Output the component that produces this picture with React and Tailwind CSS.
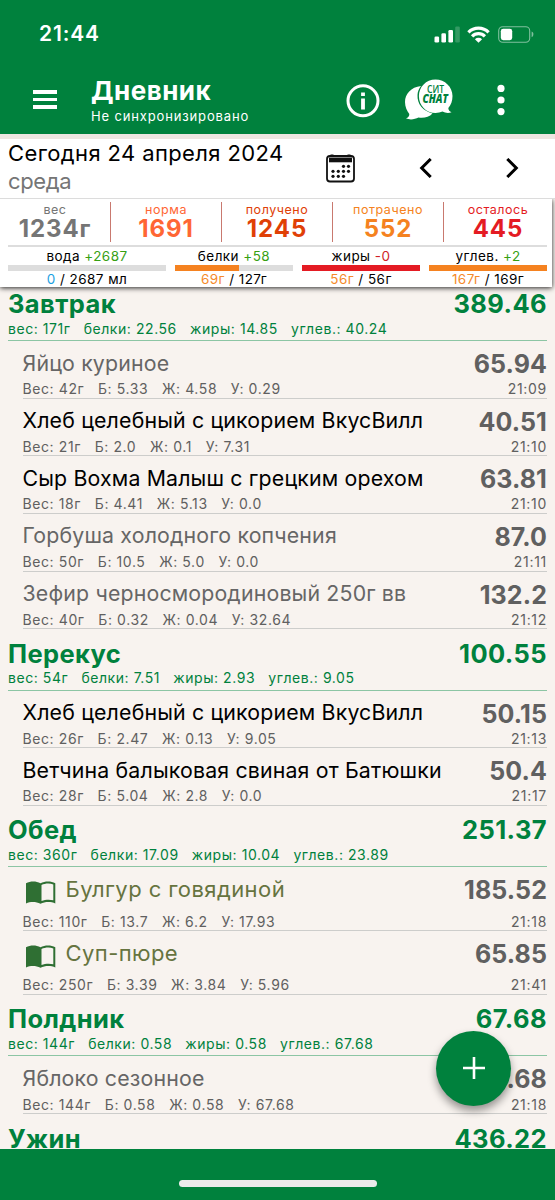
import React from "react";

const meals = [
  {
    name: "Завтрак", total: "389.46",
    meta: ["вес: 171г", "белки: 22.56", "жиры: 14.85", "углев.: 40.24"],
    items: [
      { name: "Яйцо куриное", kcal: "65.94", time: "21:09", meta: ["Вес: 42г", "Б: 5.33", "Ж: 4.58", "У: 0.29"] },
      { name: "Хлеб целебный с цикорием ВкусВилл", kcal: "40.51", time: "21:10", dark: true, meta: ["Вес: 21г", "Б: 2.0", "Ж: 0.1", "У: 7.31"] },
      { name: "Сыр Вохма Малыш с грецким орехом", kcal: "63.81", time: "21:10", dark: true, meta: ["Вес: 18г", "Б: 4.41", "Ж: 5.13", "У: 0.0"] },
      { name: "Горбуша холодного копчения", kcal: "87.0", time: "21:11", meta: ["Вес: 50г", "Б: 10.5", "Ж: 5.0", "У: 0.0"] },
      { name: "Зефир черносмородиновый 250г вв", kcal: "132.2", time: "21:12", meta: ["Вес: 40г", "Б: 0.32", "Ж: 0.04", "У: 32.64"] },
    ],
  },
  {
    name: "Перекус", total: "100.55",
    meta: ["вес: 54г", "белки: 7.51", "жиры: 2.93", "углев.: 9.05"],
    items: [
      { name: "Хлеб целебный с цикорием ВкусВилл", kcal: "50.15", time: "21:13", dark: true, meta: ["Вес: 26г", "Б: 2.47", "Ж: 0.13", "У: 9.05"] },
      { name: "Ветчина балыковая свиная от Батюшки", kcal: "50.4", time: "21:17", dark: true, meta: ["Вес: 28г", "Б: 5.04", "Ж: 2.8", "У: 0.0"] },
    ],
  },
  {
    name: "Обед", total: "251.37",
    meta: ["вес: 360г", "белки: 17.09", "жиры: 10.04", "углев.: 23.89"],
    items: [
      { name: "Булгур с говядиной", kcal: "185.52", time: "21:18", recipe: true, meta: ["Вес: 110г", "Б: 13.7", "Ж: 6.2", "У: 17.93"] },
      { name: "Суп-пюре", kcal: "65.85", time: "21:41", recipe: true, meta: ["Вес: 250г", "Б: 3.39", "Ж: 3.84", "У: 5.96"] },
    ],
  },
  {
    name: "Полдник", total: "67.68",
    meta: ["вес: 144г", "белки: 0.58", "жиры: 0.58", "углев.: 67.68"],
    items: [
      { name: "Яблоко сезонное", kcal: "67.68", time: "21:18", meta: ["Вес: 144г", "Б: 0.58", "Ж: 0.58", "У: 67.68"] },
    ],
  },
  { name: "Ужин", total: "436.22", meta: [], items: [] },
];

const totals = [
  { label: "вес", value: "1234г", color: "text-[#757575]" },
  { label: "норма", value: "1691", color: "text-[#ff6634]" },
  { label: "получено", value: "1245", color: "text-[#e04006]" },
  { label: "потрачено", value: "552", color: "text-[#f58220]" },
  { label: "осталось", value: "445", color: "text-[#e41b23]" },
];

const bars = [
  { label: "вода", diff: "+2687", diffColor: "text-[#36a013]", now: "0", nowColor: "text-[#1ba1e2]", goal: "2687 мл", pct: 0, fill: "bg-[#1ba1e2]" },
  { label: "белки", diff: "+58", diffColor: "text-[#36a013]", now: "69г", nowColor: "text-[#f58a2a]", goal: "127г", pct: 54, fill: "bg-[#f58220]" },
  { label: "жиры", diff: "-0", diffColor: "text-[#d01f26]", now: "56г", nowColor: "text-[#f58a2a]", goal: "56г", pct: 100, fill: "bg-[#e41b23]" },
  { label: "углев.", diff: "+2", diffColor: "text-[#36a013]", now: "167г", nowColor: "text-[#f58a2a]", goal: "169г", pct: 100, fill: "bg-[#f58220]" },
];

function StatusBar() {
  return (
    <div className="flex h-[68px] items-center pl-[39px] pr-[21px]">
      <span className="text-[21px] leading-[24px] font-semibold tracking-[0.84px]">21:44</span>
      <div className="ml-auto flex items-center">
        <svg className="h-[17px] w-[26px]" viewBox="0 0 26 17" fill="white">
          <rect x="0.5" y="10.5" width="4.6" height="6" rx="1.3" />
          <rect x="7.4" y="7.3" width="4.6" height="9.2" rx="1.3" />
          <rect x="14.4" y="4" width="4.6" height="12.5" rx="1.3" />
          <rect x="21.2" y="0.5" width="4.6" height="16" rx="1.3" opacity="0.2" />
        </svg>
        <svg className="ml-[7px] h-[17px] w-[23px]" viewBox="0 0 23 17" fill="none" stroke="white" strokeWidth="3.2">
          <path d="M1.4 6.3A14.4 14.4 0 0 1 21.6 6.3" />
          <path d="M5.1 10.3A9 9 0 0 1 17.9 10.3" />
          <path d="M11.5 16.8L7.9 13.2A5.1 5.1 0 0 1 15.1 13.2Z" fill="white" stroke="none" />
        </svg>
        <svg className="ml-[8px] h-[17px] w-[36px]" viewBox="0 0 36 17">
          <rect x="0.7" y="0.7" width="31" height="15.6" rx="4" fill="none" stroke="white" strokeOpacity="0.5" strokeWidth="1.1" />
          <rect x="2.8" y="2.8" width="11.4" height="11.4" rx="2.4" fill="white" />
          <path d="M33.6 5.6C36 6.3 36 10.3 33.6 11.2Z" fill="white" opacity="0.5" />
        </svg>
      </div>
    </div>
  );
}

function ChatIcon() {
  return (
    <svg className="h-[42px] w-[50px]" viewBox="0 0 50 42">
      <path d="M17 7C7 8 1 15 1 23C1 28 3 32 5.3 35C5.5 37 4 38.5 2 39.6C6 41 11 40.5 14.5 38.6C20 39.5 25 38 28.5 34.5C19 32 13 25 13.5 16C13.6 12.5 15 9.5 17 7Z" fill="white" />
      <path d="M31.5 0.5C22 0.5 14.9 8 14.9 17C14.9 26.5 22 34 31.5 34C34 34 36.5 33.500 38.5 32.6C41 34 44.5 34.5 47.5 33.3C45.5 32.5 44.5 31.3 44.3 29C47 26 48.5 22 48.5 17C48.5 8 41 0.5 31.5 0.5Z" fill="white" />
      <text x="31.5" y="13.6" textAnchor="middle" fontFamily="Open Sans" fontSize="10" letterSpacing="0" fontWeight="600" fill="#00813d" textLength="17" lengthAdjust="spacingAndGlyphs">СИТ</text>
      <text x="31.3" y="23.8" textAnchor="middle" fontFamily="Open Sans" fontSize="11.4" fontWeight="800" fontStyle="italic" fill="#00813d" textLength="25.5" lengthAdjust="spacingAndGlyphs">CHAT</text>
    </svg>
  );
}

function TopBar() {
  return (
    <div className="flex h-[66px] items-center pl-[33px]">
      <div className="-mt-[3px] flex w-[24px] flex-col gap-[4px]">
        <div className="h-[3.6px] bg-white" />
        <div className="h-[3.6px] bg-white" />
        <div className="h-[3.6px] bg-white" />
      </div>
      <div className="ml-[34px] w-[255px]">
        <div className="text-[26px] leading-[30px] font-bold tracking-[0.48px]">Дневник</div>
        <div className="text-[13px] leading-[20px] tracking-[0.85px]">Не синхронизировано</div>
      </div>
      <svg className="h-[34px] w-[34px]" viewBox="0 0 34 34" fill="none" stroke="white">
        <circle cx="17" cy="16.8" r="15" strokeWidth="3" />
        <path d="M17 14.5V25.5M17 8.5V12" strokeWidth="3.8" />
      </svg>
      <div className="-mt-[2px] ml-[24px]"><ChatIcon /></div>
      <svg className="-mt-[3px] ml-[42px] h-[32px] w-[10px]" viewBox="0 0 10 32" fill="white">
        <circle cx="5" cy="4.4" r="3.6" />
        <circle cx="5" cy="16" r="3.6" />
        <circle cx="5" cy="27.6" r="3.6" />
      </svg>
    </div>
  );
}

function DateBar() {
  return (
    <div className="flex h-[60px] border-b border-[#dcdcdc] bg-white pl-[8px]">
      <div className="w-[316px] whitespace-nowrap text-[22px] leading-[28px]">
        <div className="tracking-[0.38px]">Сегодня 24 апреля 2024</div>
        <div className="text-[#757575] tracking-[-0.35px]">среда</div>
      </div>
      <svg className="mt-[14px] h-[30px] w-[32px]" viewBox="0 0 32 30">
        <rect x="3" y="3" width="27" height="25.500" rx="3" fill="none" stroke="#111" strokeWidth="1.8" />
        <rect x="5" y="4.5" width="23" height="4.800" fill="#111" />
        <path d="M8 1.5V4M25 1.5V4" stroke="#111" strokeWidth="3" />
        <g fill="#111">
          <circle cx="19.5" cy="13.3" r="1.6" /><circle cx="24.5" cy="13.3" r="1.6" />
          <circle cx="9" cy="18.3" r="1.6" /><circle cx="14.3" cy="18.3" r="1.6" /><circle cx="19.5" cy="18.3" r="1.6" /><circle cx="24.5" cy="18.3" r="1.6" />
          <circle cx="9" cy="23.3" r="1.6" /><circle cx="14.3" cy="23.3" r="1.6" /><circle cx="19.5" cy="23.3" r="1.6" />
        </g>
      </svg>
      <svg className="ml-[63px] mt-[19px] h-[20px] w-[14px]" viewBox="0 0 14 20" fill="none" stroke="black" strokeWidth="3">
        <path d="M11.7 1L2.7 10L11.7 19" />
      </svg>
      <svg className="ml-[72px] mt-[19px] h-[20px] w-[14px]" viewBox="0 0 14 20" fill="none" stroke="black" strokeWidth="3">
        <path d="M2.3 1L11.3 10L2.3 19" />
      </svg>
    </div>
  );
}

function Summary() {
  return (
    <div className="relative h-[88px] w-[552px] bg-white shadow-[0_1px_5px_0_rgba(0,0,0,0.85)]">
      <div className="grid h-[46px] grid-cols-[111px_111px_111px_111px_108px] pt-[3px]">
        {totals.map((t, i) => (
          <div key={t.label} className={`h-[40px] text-center whitespace-nowrap ${t.color} ${i < 4 ? "border-r border-[#c9796f]" : ""}`}>
            <div className="text-[12.5px] leading-[16px] tracking-[0.55px]">{t.label}</div>
            <div className="text-[24px] leading-[21px] font-bold tracking-[0.9px]">{t.value}</div>
          </div>
        ))}
      </div>
      <div className="ml-[8px] h-[1.5px] w-[539px] bg-[#dddddd]" />
      <div className="flex gap-[9px] pl-[8px] pt-[1px]">
        {bars.map((b, i) => (
          <div key={b.label} className={`text-center text-[13.5px] tracking-[0.45px] whitespace-nowrap ${i === 0 ? "w-[158px]" : "w-[118px]"}`}>
            <div className="leading-[17px]">{b.label} <span className={b.diffColor}>{b.diff}</span></div>
            <div className="h-[6px] bg-[#dddddd]">
              <div className={`h-full ${b.fill}`} style={{ width: `${b.pct}%` }} />
            </div>
            <div className="leading-[16px]"><span className={b.nowColor}>{b.now}</span> / {b.goal}</div>
          </div>
        ))}
      </div>
    </div>
  );
}

function Meta({ parts, gap }) {
  return (
    <div className={`flex text-[14px] leading-[16px] ${gap}`}>
      {parts.map((p) => <span key={p}>{p}</span>)}
    </div>
  );
}

function BookIcon() {
  return (
    <svg className="mt-[4px] h-[26px] w-[32px] shrink-0" viewBox="0 0 32 26">
      <path d="M2 4.2C6.5 1.8 12 1.8 16.5 4.2C21 1.8 27 1.8 31.3 4.2V24.5C27 22.6 21 22.6 16.5 24.8C12 22.6 6.5 22.6 2 24.5Z" fill="#2f6f33" />
      <path d="M17.5 6C21 4.3 26 4 29.3 5.5V21.3C26 20.3 21 20.5 17.5 22Z" fill="#f8f3ef" />
    </svg>
  );
}

function Item({ item }) {
  const nameColor = item.recipe ? "text-[#66743f]" : item.dark ? "text-black" : "text-[#666666]";
  return (
    <div className={`ml-[22.5px] mr-[8px] flex justify-between border-b border-[#cdcdcb] whitespace-nowrap text-[#606060] ${item.recipe ? "h-[63.7px]" : "h-[57.65px]"}`}>
      <div className="flex flex-col justify-between pb-[0.5px]">
        <div className={`flex pt-[7.5px] leading-[28px] ${nameColor} ${item.recipe ? "gap-[10px] pl-[1px] text-[22px] tracking-[0.42px]" : "text-[21.3px] tracking-[0.17px]"}`}>
          {item.recipe && <BookIcon />}
          <span>{item.name}</span>
        </div>
        <Meta parts={item.meta} gap="gap-[13.7px] tracking-[0.6px]" />
      </div>
      <div className="flex flex-col items-end justify-between pb-[0.5px]">
        <div className="pt-[9px] text-[25px] leading-[28px] font-bold tracking-[0.1px]">{item.kcal}</div>
        <div className="text-[14px] leading-[16px] tracking-[0.7px]">{item.time}</div>
      </div>
    </div>
  );
}

function Meal({ meal }) {
  return (
    <section>
      <div className="mx-[8px] h-[61.5px] border-b border-[#8cc5a4] pt-[10.5px] text-[#00813d] whitespace-nowrap">
        <div className="flex justify-between text-[25.5px] leading-[28px] font-bold tracking-[0.4px]">
          <span>{meal.name}</span>
          <span>{meal.total}</span>
        </div>
        <div className="pt-[2.5px]"><Meta parts={meal.meta} gap="gap-[13.2px] tracking-[0.56px]" /></div>
      </div>
      {meal.items.map((it) => <Item key={it.name} item={it} />)}
    </section>
  );
}

export default function App() {
  return (
    <div className="relative flex h-[1200px] w-[555px] flex-col overflow-hidden bg-[#f8f3ef] font-['Inter',sans-serif] text-black">
      <header className="h-[134px] shrink-0 bg-[#00813d] text-white">
        <StatusBar />
        <TopBar />
      </header>
      <div className="relative z-10 shrink-0 bg-[#ede6e1] pt-[5px]"><DateBar /></div>
      <Summary />
      <main className="-mt-[7.5px] min-h-0 flex-1 overflow-hidden">
        {meals.map((m) => <Meal key={m.name} meal={m} />)}
      </main>
      <footer className="flex h-[51px] shrink-0 justify-center bg-[#00813d] pt-[31px]">
        <div className="h-[7px] w-[198px] rounded-full bg-[#ebebeb]" />
      </footer>
      <button className="absolute top-[1031px] left-[436px] flex h-[75px] w-[75px] items-center justify-center rounded-full bg-[#00813d] shadow-[0_5px_8px_rgba(0,0,0,0.4)]">
        <svg className="-mt-[1px] h-[22px] w-[22px]" viewBox="0 0 22 22" stroke="white" strokeWidth="2.6">
          <path d="M11 0V22M0 11H22" />
        </svg>
      </button>
    </div>
  );
}
